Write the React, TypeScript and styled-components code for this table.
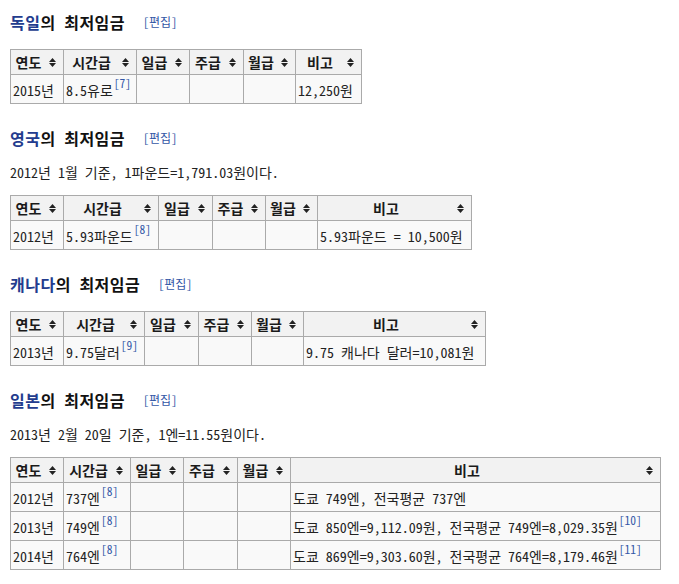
import React from "react";
import styled, { createGlobalStyle } from "styled-components";

const FONT = `"Noto Sans Mono CJK KR", "Noto Sans CJK KR", "Noto Sans", sans-serif`;

const GlobalStyle = createGlobalStyle`
  html, body { margin: 0; padding: 0; background: #fff; }
  body {
    font-family: ${FONT};
    color: #222;
    font-size: 14px;
  }
`;

const Page = styled.div`
  padding: 10px 0 0 10px;
  display: flex;
  flex-direction: column;
  align-items: flex-start;
`;

const Section = styled.section`
  display: flex;
  flex-direction: column;
  align-items: flex-start;
  & + & { margin-top: 22px; }
`;

const Heading = styled.h2<{ $hasNote?: boolean }>`
  margin: 0 0 ${(p) => (p.$hasNote ? 12 : 15)}px 0;
  height: 24px;
  line-height: 24px;
  font-size: 16px;
  font-weight: bold;
  color: #111;
  letter-spacing: 0.5px;
  display: flex;
  align-items: center;
  white-space: nowrap;
`;

const HeadLink = styled.a`
  color: #233c8e;
  text-decoration: none;
`;

const EditLink = styled.a`
  margin-left: 18px;
  font-size: 12px;
  font-weight: normal;
  letter-spacing: 0;
  color: #3357a6;
  text-decoration: none;
`;

const Note = styled.p`
  margin: 0 0 13px 0;
  line-height: 20px;
  font-size: 14px;
  color: #222;
  white-space: nowrap;
`;

const Table = styled.table<{ $width: number }>`
  border-collapse: collapse;
  table-layout: fixed;
  width: ${(p) => p.$width}px;
  border: 1px solid #aaa;
  font-size: 14px;
`;

const Th = styled.th`
  background: #f2f2f2;
  border: 1px solid #aaa;
  height: 24px;
  padding: 0 0 0 3px;
  font-weight: bold;
  color: #1a1a1a;
  white-space: nowrap;
  line-height: 20px;
`;

const HeadInner = styled.div`
  display: grid;
  grid-template-columns: 1fr auto;
  align-items: center;
  column-gap: 6px;
  padding-right: 7px;
`;

const HeadText = styled.span`
  text-align: center;
`;

const Td = styled.td`
  background: #f9f9f9;
  border: 1px solid #aaa;
  height: 26px;
  padding: 2px 2px 0 2px;
  white-space: nowrap;
  line-height: 20px;
`;

const Ref = styled.sup`
  font-size: 11.5px;
  color: #3357a6;
  vertical-align: top;
  line-height: 12px;
  margin-left: 1px;
  position: relative;
  top: -3px;
`;

const SortIcon = () => (
  <svg width="7" height="9" viewBox="0 0 7 9" aria-hidden="true">
    <path d="M3.5 0 L7 4 L0 4 Z M0 5 L7 5 L3.5 9 Z" fill="#222" />
  </svg>
);

type Row = { year: string; hourly: string; hourlyRef?: string; note: string; noteRef?: string };

const headers = ["연도", "시간급", "일급", "주급", "월급", "비고"];

const WageTable = ({ widths, rows }: { widths: number[]; rows: Row[] }) => (
  <Table $width={widths.reduce((a, b) => a + b, 0)}>
    <colgroup>
      {widths.map((w, i) => (
        <col key={i} style={{ width: w }} />
      ))}
    </colgroup>
    <thead>
      <tr>
        {headers.map((h) => (
          <Th key={h}>
            <HeadInner>
              <HeadText>{h}</HeadText>
              <SortIcon />
            </HeadInner>
          </Th>
        ))}
      </tr>
    </thead>
    <tbody>
      {rows.map((r) => (
        <tr key={r.year}>
          <Td>{r.year}</Td>
          <Td>
            {r.hourly}
            {r.hourlyRef && <Ref>[{r.hourlyRef}]</Ref>}
          </Td>
          <Td />
          <Td />
          <Td />
          <Td>
            {r.note}
            {r.noteRef && <Ref>[{r.noteRef}]</Ref>}
          </Td>
        </tr>
      ))}
    </tbody>
  </Table>
);

const Title = ({ country, hasNote }: { country: string; hasNote?: boolean }) => (
  <Heading $hasNote={hasNote}>
    <HeadLink href="#">{country}</HeadLink>의 최저임금
    <EditLink href="#">[편집]</EditLink>
  </Heading>
);

export default function App() {
  return (
    <>
      <GlobalStyle />
      <Page>
        <Section>
          <Title country="독일" />
          <WageTable
            widths={[53, 73, 53, 54, 52, 66]}
            rows={[{ year: "2015년", hourly: "8.5유로", hourlyRef: "7", note: "12,250원" }]}
          />
        </Section>
        <Section>
          <Title country="영국" hasNote />
          <Note>2012년 1월 기준, 1파운드=1,791.03원이다.</Note>
          <WageTable
            widths={[53, 95, 54, 53, 52, 154]}
            rows={[{ year: "2012년", hourly: "5.93파운드", hourlyRef: "8", note: "5.93파운드 = 10,500원" }]}
          />
        </Section>
        <Section>
          <Title country="캐나다" />
          <WageTable
            widths={[53, 81, 54, 53, 52, 182]}
            rows={[{ year: "2013년", hourly: "9.75달러", hourlyRef: "9", note: "9.75 캐나다 달러=10,081원" }]}
          />
        </Section>
        <Section>
          <Title country="일본" hasNote />
          <Note>2013년 2월 20일 기준, 1엔=11.55원이다.</Note>
          <WageTable
            widths={[53, 67, 53, 54, 53, 370]}
            rows={[
              { year: "2012년", hourly: "737엔", hourlyRef: "8", note: "도쿄 749엔, 전국평균 737엔" },
              { year: "2013년", hourly: "749엔", hourlyRef: "8", note: "도쿄 850엔=9,112.09원, 전국평균 749엔=8,029.35원", noteRef: "10" },
              { year: "2014년", hourly: "764엔", hourlyRef: "8", note: "도쿄 869엔=9,303.60원, 전국평균 764엔=8,179.46원", noteRef: "11" },
            ]}
          />
        </Section>
      </Page>
    </>
  );
}
